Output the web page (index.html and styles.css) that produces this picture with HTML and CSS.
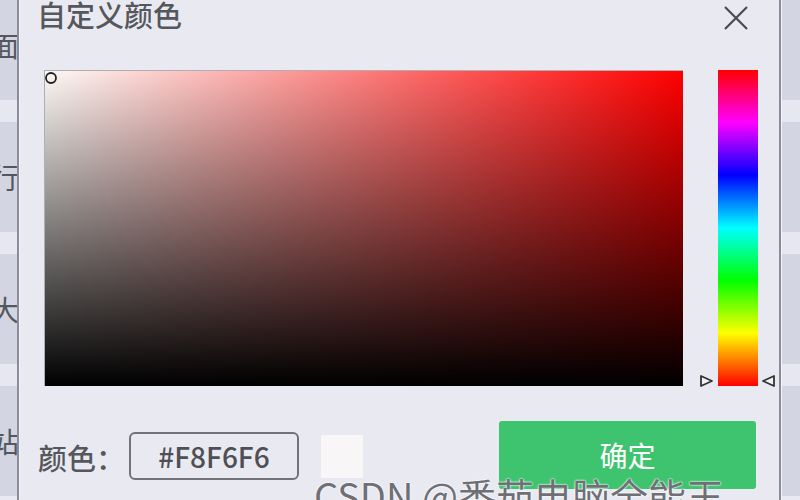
FILE: index.html
```html
<!DOCTYPE html>
<html lang="zh">
<head>
<meta charset="utf-8">
<title>自定义颜色</title>
<link rel="stylesheet" href="styles.css">
</head>
<body>
<div class="page">
  <div class="strip strip-left">
    <div class="item"><span class="ch">面</span></div><div class="band"></div>
    <div class="item"><span class="ch">行</span></div><div class="band"></div>
    <div class="item"><span class="ch">大</span></div><div class="band"></div>
    <div class="item"><span class="ch">站</span></div>
  </div>
  <div class="edge"></div>
  <div class="dialog">
    <div class="header">
      <div class="title">自定义颜色</div>
      <svg class="close" width="26" height="26" viewBox="0 0 26 26"><path d="M2 2 L24 24 M24 2 L2 24" stroke="#4a4a4f" stroke-width="2.2" fill="none"/></svg>
    </div>
    <div class="picker">
      <div class="sv">
        <div class="sv-dark"></div>
        <svg class="cursor" width="14" height="14" viewBox="0 0 14 14"><circle cx="7" cy="7" r="5" fill="none" stroke="#222" stroke-width="1.8"/></svg>
      </div>
      <div class="hue-wrap">
        <div class="hue"></div>
        <svg class="tri tri-l" width="15" height="14" viewBox="0 0 15 14"><path d="M2 2 L13 7 L2 12 Z" fill="#f2f2f6" stroke="#333" stroke-width="1.8" stroke-linejoin="round"/></svg>
        <svg class="tri tri-r" width="15" height="14" viewBox="0 0 15 14"><path d="M13 2 L2 7 L13 12 Z" fill="#f2f2f6" stroke="#333" stroke-width="1.8" stroke-linejoin="round"/></svg>
      </div>
    </div>
    <div class="footer">
      <div class="label">颜色：</div>
      <div class="input">#F8F6F6</div>
      <div class="swatch"></div>
      <div class="btn">确定</div>
    </div>
    <div class="watermark">CSDN @番茄电脑全能王</div>
  </div>
  <div class="edge"></div>
  <div class="strip strip-right">
    <div class="item"></div><div class="band"></div>
    <div class="item"></div><div class="band"></div>
    <div class="item"></div><div class="band"></div>
    <div class="item"></div>
  </div>
</div>
</body>
</html>
```
FILE: styles.css
```css
html, body {
  margin: 0;
  padding: 0;
  width: 800px;
  height: 500px;
  overflow: hidden;
  background: #e9eaf1;
  font-family: "Noto Sans CJK SC", "Noto Sans", sans-serif;
}
.page {
  display: flex;
  width: 800px;
  height: 500px;
  overflow: hidden;
}
.strip {
  width: 17px;
  flex: none;
  display: flex;
  flex-direction: column;
  margin-top: -10px;
  overflow: hidden;
}
.strip-left { width: 17px; }
.strip-right { width: 18px; }
.item {
  height: 110px;
  flex: none;
  background: #d3d5e2;
  display: flex;
  align-items: center;
  justify-content: flex-end;
  overflow: hidden;
}
.band {
  height: 22px;
  flex: none;
  background: #e6e7f0;
}
.ch {
  font-size: 28px;
  line-height: 28px;
  color: #55575e;
  margin-right: -2px;
  flex: none;
}
.edge {
  width: 2px;
  flex: none;
  background: #8a8d99;
  border-right: 1px solid #f4f4f8;
}
.dialog {
  flex: 1;
  position: relative;
  background: #e9eaf1;
  display: flex;
  flex-direction: column;
}
.header {
  height: 70px;
  display: flex;
  justify-content: space-between;
  align-items: flex-start;
}
.title {
  margin-left: 17px;
  font-size: 29px;
  line-height: 29px;
  font-weight: 500;
  color: #56575c;
}
.close {
  margin-top: 5px;
  margin-right: 30px;
}
.picker {
  display: flex;
  height: 316px;
  padding-left: 24px;
  gap: 35px;
}
.sv {
  position: relative;
  width: 639px;
  height: 316px;
  box-sizing: border-box;
  border-top: 1px solid #b0aeb4;
  border-left: 1px solid #b0aeb4;
  background: linear-gradient(to right, #fbf9f6, #ff0000);
}
.sv-dark {
  width: 100%;
  height: 100%;
  background: linear-gradient(to bottom, rgba(0,0,0,0), #000);
}
.cursor {
  position: absolute;
  left: -1px;
  top: 0px;
}
.hue-wrap {
  position: relative;
  width: 40px;
  height: 316px;
}
.hue {
  width: 40px;
  height: 316px;
  background: linear-gradient(to bottom, #ff0000 0%, #ff00ff 16.6%, #0000ff 33.3%, #00ffff 50%, #00ff00 66.6%, #ffff00 83.3%, #ff0000 100%);
}
.tri {
  position: absolute;
  top: 304px;
}
.tri-l { left: -19px; }
.tri-r { left: 43px; }
.footer {
  display: flex;
  align-items: flex-start;
  margin-top: 35px;
  padding-left: 18px;
}
.label {
  width: 91px;
  margin-top: 20px;
  font-size: 29px;
  line-height: 32px;
  font-weight: 500;
  color: #56575c;
}
.input {
  margin-top: 11px;
  width: 170px;
  height: 48px;
  box-sizing: border-box;
  border: 2px solid #727278;
  border-radius: 6px;
  font-size: 28px;
  line-height: 44px;
  font-weight: 500;
  text-align: center;
  color: #4e4f55;
}
.swatch {
  margin-top: 14px;
  margin-left: 22px;
  width: 42px;
  height: 43px;
  background: #f8f6f6;
}
.btn {
  margin-left: auto;
  margin-right: 23px;
  width: 257px;
  height: 68px;
  background: #3ec46f;
  border-radius: 3px;
  color: #ffffff;
  font-size: 28px;
  line-height: 68px;
  text-align: center;
}
.watermark {
  position: absolute;
  left: 294px;
  top: 476px;
  font-size: 38px;
  line-height: 38px;
  color: #6f7076;
  white-space: nowrap;
  text-shadow: 0 0 2px #ffffff, 0 0 2px #ffffff;
}
```
